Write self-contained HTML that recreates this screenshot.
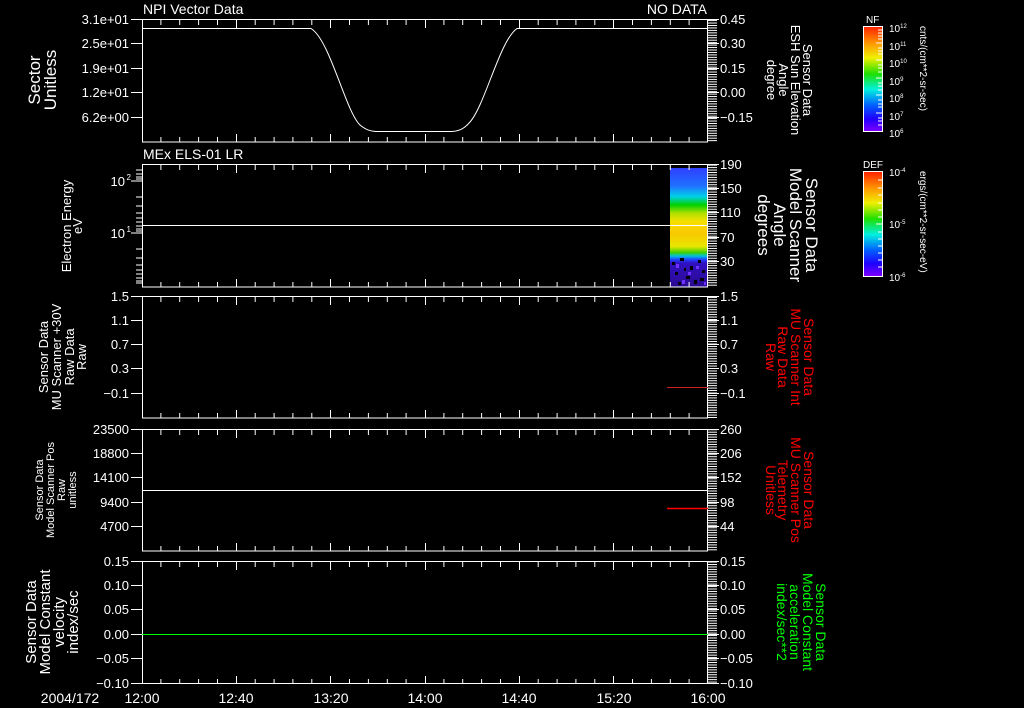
<!DOCTYPE html>
<html><head><meta charset="utf-8"><style>
html,body{margin:0;padding:0;background:#000;}
svg{display:block;}
text{font-family:"Liberation Sans",sans-serif;fill:#fff;}
</style></head><body>
<svg width="1024" height="708" viewBox="0 0 1024 708" xmlns="http://www.w3.org/2000/svg">
<defs>
<pattern id="tl" patternUnits="userSpaceOnUse" width="20" height="2.45" x="0" y="0.5"><line x1="133" y1="0.5" x2="142" y2="0.5" stroke="#fff" stroke-width="1"/></pattern>
<pattern id="tr" patternUnits="userSpaceOnUse" width="20" height="2.45" x="0" y="0.5"><line x1="0" y1="0.5" x2="9" y2="0.5" stroke="#fff" stroke-width="1"/></pattern>
<path id="tk" stroke="#fff" fill="none" d="M160.9 0v5M179.7 0v5M198.6 0v5M217.5 0v5M236.5 0v8M255.2 0v5M274.1 0v5M292.9 0v5M311.8 0v5M330.5 0v8M349.5 0v5M368.4 0v5M387.3 0v5M406.1 0v5M425.5 0v8M443.9 0v5M462.7 0v5M481.6 0v5M500.5 0v5M519.5 0v8M538.2 0v5M557.1 0v5M575.9 0v5M594.8 0v5M613.5 0v8M632.5 0v5M651.4 0v5M670.3 0v5M689.1 0v5"/>
<linearGradient id="rb" x1="0" y1="0" x2="0" y2="1">
<stop offset="0" stop-color="#ff2000"/><stop offset="0.15" stop-color="#ff9000"/><stop offset="0.3" stop-color="#f0f000"/><stop offset="0.45" stop-color="#20e000"/><stop offset="0.6" stop-color="#00f0e0"/><stop offset="0.75" stop-color="#0060ff"/><stop offset="0.88" stop-color="#2000ff"/><stop offset="1" stop-color="#8000ff"/>
</linearGradient>
<linearGradient id="sp" x1="0" y1="0" x2="0" y2="1">
<stop offset="0" stop-color="#3040ff"/><stop offset="0.15" stop-color="#2070ff"/><stop offset="0.24" stop-color="#00d0e8"/><stop offset="0.31" stop-color="#00d000"/><stop offset="0.38" stop-color="#b0e000"/><stop offset="0.45" stop-color="#f8e000"/><stop offset="0.55" stop-color="#f8c800"/><stop offset="0.66" stop-color="#e8e800"/><stop offset="0.71" stop-color="#40d000"/><stop offset="0.74" stop-color="#00c0e0"/><stop offset="0.77" stop-color="#2040ff"/><stop offset="0.8" stop-color="#3010c0"/><stop offset="1" stop-color="#2a0a90"/>
</linearGradient>
</defs>

<text x="143" y="14" font-size="14">NPI Vector Data</text>
<text x="707" y="14" font-size="14" text-anchor="end">NO DATA</text>
<text x="143" y="159" font-size="14">MEx ELS-01 LR</text>

<rect x="670" y="168" width="37" height="119" fill="url(#sp)"/>
<g fill="#000">
<rect x="672" y="262" width="3" height="3"/><rect x="680" y="258" width="4" height="3"/><rect x="690" y="266" width="3" height="4"/><rect x="698" y="260" width="3" height="3"/><rect x="675" y="272" width="3" height="3"/><rect x="686" y="276" width="4" height="3"/><rect x="694" y="280" width="3" height="4"/><rect x="702" y="270" width="3" height="3"/><rect x="678" y="282" width="3" height="3"/><rect x="700" y="278" width="4" height="3"/><rect x="684" y="268" width="2" height="3"/>
</g>
<g fill="#7030ff">
<rect x="676" y="264" width="3" height="4"/><rect x="688" y="272" width="3" height="3"/><rect x="696" y="266" width="3" height="3"/><rect x="682" y="280" width="3" height="4"/><rect x="704" y="282" width="2" height="3"/>
</g>

<g fill="none" stroke="#fff" stroke-width="1">
<rect x="142.5" y="19.5" width="565" height="122.5"/>
<rect x="142.5" y="164.5" width="565" height="122.5"/>
<rect x="142.5" y="296.5" width="565" height="121.5"/>
<rect x="142.5" y="429.5" width="565" height="121.5"/>
<rect x="142.5" y="561.5" width="565" height="122"/>
</g>

<rect x="133" y="20" width="9" height="122" fill="url(#tl)"/>
<rect x="133" y="297" width="9" height="121" fill="url(#tl)"/>
<rect x="133" y="430" width="9" height="121" fill="url(#tl)"/>
<rect x="133" y="562" width="9" height="122" fill="url(#tl)"/>
<g transform="translate(708,0)">
<rect x="0" y="20" width="9" height="122" fill="url(#tr)"/>
<rect x="0" y="165" width="9" height="122" fill="url(#tr)"/>
<rect x="0" y="297" width="9" height="121" fill="url(#tr)"/>
<rect x="0" y="430" width="9" height="121" fill="url(#tr)"/>
<rect x="0" y="562" width="9" height="122" fill="url(#tr)"/>
</g>
<g stroke="#fff">
<line x1="136" y1="170" x2="142" y2="170"/><line x1="136" y1="174" x2="142" y2="174"/><line x1="136" y1="177" x2="142" y2="177"/><line x1="136" y1="179" x2="142" y2="179"/><line x1="131" y1="181" x2="142" y2="181"/>
<line x1="136" y1="197" x2="142" y2="197"/><line x1="136" y1="206" x2="142" y2="206"/><line x1="136" y1="213" x2="142" y2="213"/><line x1="136" y1="218" x2="142" y2="218"/><line x1="136" y1="222" x2="142" y2="222"/><line x1="136" y1="226" x2="142" y2="226"/><line x1="136" y1="229" x2="142" y2="229"/><line x1="136" y1="231" x2="142" y2="231"/><line x1="131" y1="233" x2="142" y2="233"/>
<line x1="136" y1="249" x2="142" y2="249"/><line x1="136" y1="258" x2="142" y2="258"/><line x1="136" y1="265" x2="142" y2="265"/><line x1="136" y1="270" x2="142" y2="270"/><line x1="136" y1="274" x2="142" y2="274"/><line x1="136" y1="278" x2="142" y2="278"/><line x1="136" y1="281" x2="142" y2="281"/><line x1="136" y1="283" x2="142" y2="283"/>
</g>

<use href="#tk" transform="translate(0,20)"/><use href="#tk" transform="translate(0,142) scale(1,-1)"/>
<use href="#tk" transform="translate(0,165)"/><use href="#tk" transform="translate(0,287) scale(1,-1)"/>
<use href="#tk" transform="translate(0,297)"/><use href="#tk" transform="translate(0,418) scale(1,-1)"/>
<use href="#tk" transform="translate(0,430)"/><use href="#tk" transform="translate(0,551) scale(1,-1)"/>
<use href="#tk" transform="translate(0,562)"/><use href="#tk" transform="translate(0,684) scale(1,-1)"/>

<g stroke="#fff">
<path d="M131 19.5h11M131 43.5h11M131 68.5h11M131 92.5h11M131 117.5h11M708 19.5h11M708 43.5h11M708 68.5h11M708 92.5h11M708 117.5h11"/>
<path d="M708 164.5h11M708 188.5h11M708 212.5h11M708 237.5h11M708 261.5h11"/>
<path d="M131 296.5h11M131 320.5h11M131 344.5h11M131 368.5h11M131 393.5h11M708 296.5h11M708 320.5h11M708 344.5h11M708 368.5h11M708 393.5h11"/>
<path d="M131 429.5h11M131 453.5h11M131 477.5h11M131 502.5h11M131 526.5h11M708 429.5h11M708 453.5h11M708 477.5h11M708 502.5h11M708 526.5h11"/>
<path d="M131 561.5h11M131 585.5h11M131 609.5h11M131 634.5h11M131 658.5h11M131 683.5h11M708 561.5h11M708 585.5h11M708 609.5h11M708 634.5h11M708 658.5h11M708 683.5h11"/>
</g>

<path d="M142 28.5H311C330 40 345 110 360 125C366 130 370 131 376 131.5H452C460 131 465 128 470 122C485 105 500 40 517 28.5H708" fill="none" stroke="#fff"/>
<line x1="142" y1="225.5" x2="708" y2="225.5" stroke="#fff"/>
<line x1="667" y1="387.5" x2="708" y2="387.5" stroke="#d02020"/>
<line x1="142" y1="490.5" x2="708" y2="490.5" stroke="#fff"/>
<line x1="667" y1="508.5" x2="708" y2="508.5" stroke="#ff0000" stroke-width="1.5"/>
<line x1="142" y1="634.5" x2="708" y2="634.5" stroke="#00ff00"/>

<g font-size="13" text-anchor="end">
<text x="129" y="24">3.1e+01</text><text x="129" y="48">2.5e+01</text><text x="129" y="73">1.9e+01</text><text x="129" y="97">1.2e+01</text><text x="129" y="122">6.2e+00</text>
<text x="125" y="186">10</text><text x="131" y="180" font-size="8">2</text><text x="125" y="238">10</text><text x="131" y="232" font-size="8">1</text>
<text x="129" y="301">1.5</text><text x="129" y="325">1.1</text><text x="129" y="349">0.7</text><text x="129" y="373">0.3</text><text x="129" y="398">−0.1</text>
<text x="129" y="434">23500</text><text x="129" y="458">18800</text><text x="129" y="482">14100</text><text x="129" y="507">9400</text><text x="129" y="531">4700</text>
<text x="129" y="566">0.15</text><text x="129" y="590">0.10</text><text x="129" y="614">0.05</text><text x="129" y="639">0.00</text><text x="129" y="663">−0.05</text><text x="129" y="688">−0.10</text>
</g>
<g font-size="13">
<text x="720" y="24">0.45</text><text x="720" y="48">0.30</text><text x="720" y="73">0.15</text><text x="720" y="97">0.00</text><text x="720" y="122">−0.15</text>
<text x="720" y="169">190</text><text x="720" y="193">150</text><text x="720" y="217">110</text><text x="720" y="242">70</text><text x="720" y="266">30</text>
<text x="720" y="301">1.5</text><text x="720" y="325">1.1</text><text x="720" y="349">0.7</text><text x="720" y="373">0.3</text><text x="720" y="398">−0.1</text>
<text x="720" y="434">260</text><text x="720" y="458">206</text><text x="720" y="482">152</text><text x="720" y="507">98</text><text x="720" y="531">44</text>
<text x="720" y="566">0.15</text><text x="720" y="590">0.10</text><text x="720" y="614">0.05</text><text x="720" y="639">0.00</text><text x="720" y="663">−0.05</text><text x="720" y="688">−0.10</text>
</g>
<g font-size="14" text-anchor="middle">
<text x="70" y="703">2004/172</text><text x="142" y="703">12:00</text><text x="236" y="703">12:40</text><text x="331" y="703">13:20</text><text x="425" y="703">14:00</text><text x="519" y="703">14:40</text><text x="614" y="703">15:20</text><text x="708" y="703">16:00</text>
</g>

<g text-anchor="middle">
<text transform="translate(40,80) rotate(-90)" font-size="17">Sector</text>
<text transform="translate(56,80) rotate(-90)" font-size="17">Unitless</text>
<text transform="translate(71,226) rotate(-90)" font-size="13">Electron Energy</text>
<text transform="translate(82,226) rotate(-90)" font-size="13">eV</text>
<text transform="translate(48,357) rotate(-90)" font-size="13">Sensor Data</text>
<text transform="translate(61,357) rotate(-90)" font-size="13">MU Scanner +30V</text>
<text transform="translate(74,357) rotate(-90)" font-size="13">Raw Data</text>
<text transform="translate(86,357) rotate(-90)" font-size="13">Raw</text>
<text transform="translate(43,490) rotate(-90)" font-size="11">Sensor Data</text>
<text transform="translate(54,490) rotate(-90)" font-size="11">Model Scanner Pos</text>
<text transform="translate(65,490) rotate(-90)" font-size="11">Raw</text>
<text transform="translate(76,490) rotate(-90)" font-size="11">unitless</text>
<text transform="translate(36,622) rotate(-90)" font-size="15">Sensor Data</text>
<text transform="translate(50,622) rotate(-90)" font-size="15">Model Constant</text>
<text transform="translate(64,622) rotate(-90)" font-size="15">velocity</text>
<text transform="translate(78,622) rotate(-90)" font-size="15">index/sec</text>
</g>
<g text-anchor="middle">
<text transform="translate(803,80) rotate(90)" font-size="13">Sensor Data</text>
<text transform="translate(791,80) rotate(90)" font-size="13">ESH Sun Elevation</text>
<text transform="translate(779,80) rotate(90)" font-size="13">Angle</text>
<text transform="translate(767,80) rotate(90)" font-size="13">degree</text>
<text transform="translate(806,225) rotate(90)" font-size="17">Sensor Data</text>
<text transform="translate(790,225) rotate(90)" font-size="17">Model Scanner</text>
<text transform="translate(774,225) rotate(90)" font-size="17">Angle</text>
<text transform="translate(758,225) rotate(90)" font-size="17">degrees</text>
<text transform="translate(804,357) rotate(90)" font-size="14" style="fill:#ff0000">Sensor Data</text>
<text transform="translate(791,357) rotate(90)" font-size="14" style="fill:#ff0000">MU Scanner Int</text>
<text transform="translate(778,357) rotate(90)" font-size="14" style="fill:#ff0000">Raw Data</text>
<text transform="translate(766,357) rotate(90)" font-size="14" style="fill:#ff0000">Raw</text>
<text transform="translate(804,490) rotate(90)" font-size="14" style="fill:#ff0000">Sensor Data</text>
<text transform="translate(791,490) rotate(90)" font-size="14" style="fill:#ff0000">MU Scanner Pos</text>
<text transform="translate(778,490) rotate(90)" font-size="14" style="fill:#ff0000">Telemetry</text>
<text transform="translate(766,490) rotate(90)" font-size="14" style="fill:#ff0000">Unitless</text>
<text transform="translate(816,622) rotate(90)" font-size="14" style="fill:#00ff00">Sensor Data</text>
<text transform="translate(803,622) rotate(90)" font-size="14" style="fill:#00ff00">Model Constant</text>
<text transform="translate(790,622) rotate(90)" font-size="14" style="fill:#00ff00">acceleration</text>
<text transform="translate(777,622) rotate(90)" font-size="14" style="fill:#00ff00">index/sec**2</text>
</g>

<rect x="863.5" y="26.5" width="19" height="105" fill="url(#rb)" stroke="#fff"/>
<rect x="863.5" y="171.5" width="19" height="105" fill="url(#rb)" stroke="#fff"/>
<g stroke="#fff">
<path d="M878 30h4M878 33h4M878 36h4M878 39h4M876 43h6M878 48h4M878 51h4M878 54h4M876 60h6M878 65h4M878 68h4M878 72h4M876 78h6M878 83h4M878 86h4M878 90h4M876 95h6M878 100h4M878 104h4M878 107h4M876 113h6M878 118h4M878 121h4M878 125h4"/>
<path d="M878 180h4M878 188h4M878 195h4M878 203h4M878 210h4M878 217h4M876 224h6M878 232h4M878 239h4M878 246h4M878 253h4M878 260h4M878 267h4"/>
</g>
<g font-size="10">
<text x="866" y="23">NF</text>
<text x="863" y="168">DEF</text>
<text x="889" y="32">10<tspan font-size="6" dy="-4">12</tspan></text>
<text x="889" y="50">10<tspan font-size="6" dy="-4">11</tspan></text>
<text x="889" y="67">10<tspan font-size="6" dy="-4">10</tspan></text>
<text x="889" y="85">10<tspan font-size="6" dy="-4">9</tspan></text>
<text x="889" y="102">10<tspan font-size="6" dy="-4">8</tspan></text>
<text x="889" y="120">10<tspan font-size="6" dy="-4">7</tspan></text>
<text x="889" y="137">10<tspan font-size="6" dy="-4">6</tspan></text>
<text x="889" y="176">10<tspan font-size="6" dy="-4">-4</tspan></text>
<text x="889" y="228">10<tspan font-size="6" dy="-4">-5</tspan></text>
<text x="889" y="281">10<tspan font-size="6" dy="-4">-6</tspan></text>
<text transform="translate(920,26) rotate(90)">cnts/(cm**2-sr-sec)</text>
<text transform="translate(920,171) rotate(90)">ergs/(cm**2-sr-sec-eV)</text>
</g>
</svg>
</body></html>
